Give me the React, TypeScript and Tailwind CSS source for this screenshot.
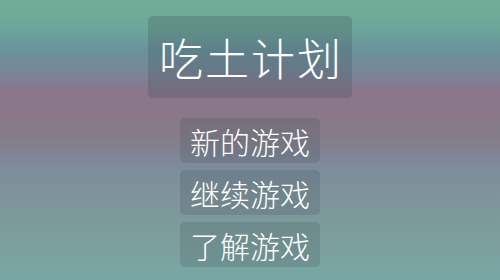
import React from "react";

const items = ["新的游戏", "继续游戏", "了解游戏"];

export default function App() {
  return (
    <div
      className="w-[500px] h-[280px] overflow-hidden flex flex-col items-center pt-[16px] bg-[linear-gradient(to_bottom,#71ae98_0%,#6ea69a_10%,#69939c_18%,#788598_26%,#8a768a_33%,#8a7788_40%,#847e8a_50%,#7e8b9b_60%,#7e949c_70%,#7d9c9a_82%,#78a8a4_100%)]"
      style={{ fontFamily: '"Noto Sans CJK SC", "Noto Sans", sans-serif' }}
    >
      <div className="w-[204px] h-[82px] rounded-[5px] bg-[#3c4a55]/25 flex items-center justify-center">
        <span className="text-white text-[44px] font-extralight leading-none tracking-[2px] pl-[2px]">
          吃土计划
        </span>
      </div>
      <div className="mt-[20px] flex flex-col gap-[7px]">
        {items.map((t) => (
          <div
            key={t}
            className="w-[140px] h-[45px] rounded-[5px] bg-[#3c4a55]/20 flex items-center justify-center"
          >
            <span className="text-white text-[30px] font-extralight leading-none">{t}</span>
          </div>
        ))}
      </div>
    </div>
  );
}
